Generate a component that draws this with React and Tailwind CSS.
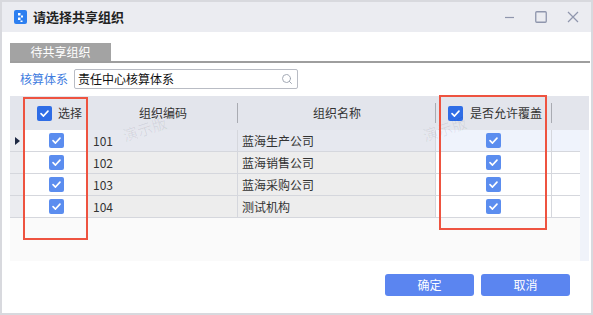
import { Search } from "lucide-react";

const ROWS = [
  { code: "101", name: "蓝海生产公司" },
  { code: "102", name: "蓝海销售公司" },
  { code: "103", name: "蓝海采购公司" },
  { code: "104", name: "测试机构" },
];

function Check({ dark }) {
  return (
    <span
      className={
        "flex h-[15px] w-[15px] items-center justify-center rounded-[2px] " +
        (dark ? "bg-[#2f6de6]" : "bg-[#5b8def]")
      }
    >
      <svg width="11" height="11" viewBox="0 0 12 12" fill="none">
        <path d="M2.2 6.2 L4.9 8.8 L9.8 3.4" stroke="#fff" strokeWidth="1.8" strokeLinecap="round" strokeLinejoin="round" />
      </svg>
    </span>
  );
}

function AppIcon() {
  return (
    <svg width="13" height="14" viewBox="0 0 13 14">
      <rect width="13" height="14" rx="2" fill="#2d7ff0" />
      <rect x="4" y="3" width="2.5" height="2.5" fill="#fff" />
      <rect x="7" y="5.5" width="2" height="2" fill="#fff" />
      <rect x="4" y="7.5" width="2.5" height="2.5" fill="#fff" />
      <rect x="6.5" y="10.5" width="2" height="1.5" fill="#fff" />
    </svg>
  );
}

const Sep = () => <span className="absolute right-0 top-[7px] h-[20px] w-px bg-[#a9abb2]" />;

export default function App() {
  return (
    <div
      className="flex h-[315px] w-[593px] flex-col border-2 border-[#d8d9de] bg-white text-[12px] text-[#333]"
      style={{ fontFamily: '"Noto Sans CJK SC", "Noto Sans", sans-serif' }}
    >
      {/* title bar */}
      <div className="flex h-[30px] shrink-0 items-center bg-[#ebecf1] pl-[12px] pr-[12px]">
        <AppIcon />
        <span className="ml-[6px] text-[13px] font-bold text-[#222]">请选择共享组织</span>
        <div className="ml-auto flex items-center gap-[20px] text-[#8f96ad]">
          <svg width="11" height="12" viewBox="0 0 11 12">
            <path d="M1 6.5 H10" stroke="currentColor" strokeWidth="1.2" />
          </svg>
          <svg width="12" height="12" viewBox="0 0 12 12">
            <rect x="0.75" y="0.75" width="10.5" height="10.5" rx="1" fill="none" stroke="currentColor" strokeWidth="1.3" />
          </svg>
          <svg width="12" height="12" viewBox="0 0 12 12">
            <path d="M1 1 L11 11 M11 1 L1 11" stroke="currentColor" strokeWidth="1.2" />
          </svg>
        </div>
      </div>

      <div className="flex flex-1 flex-col pl-[8px] pr-px">
        {/* tab */}
        <div className="mt-[11px] border-b-2 border-[#9e9e9e]">
          <div className="flex h-[18px] w-[101px] items-center justify-center bg-[#a3a3a3] text-[12px] text-white">
            待共享组织
          </div>
        </div>

        {/* account system */}
        <div className="mt-[6px] flex items-center">
          <span className="ml-[10px] text-[12px] text-[#3f7de0]">核算体系</span>
          <div className="ml-[6px] flex h-[20px] w-[224px] items-center rounded-[2px] border border-[#b9bcc4] pl-[3px] pr-[4px]">
            <span className="text-[12px] text-[#111]">责任中心核算体系</span>
            <Search className="ml-auto h-[12px] w-[12px] text-[#9aa0ad]" strokeWidth={1.8} />
          </div>
        </div>

        {/* grid */}
        <div className="relative mr-px mt-[7px] flex h-[165px] flex-col bg-[#fafafa]">
          {/* header */}
          <div className="flex h-[34px] bg-[#e3e5ec]">
            <div className="relative w-[15px]">
              <Sep />
            </div>
            <div className="relative flex w-[63px] items-center pl-[12px]">
              <Check dark />
              <span className="ml-[6px]">选择</span>
              <Sep />
            </div>
            <div className="relative flex w-[150px] items-center justify-center">
              组织编码
              <Sep />
            </div>
            <div className="relative flex w-[198px] items-center justify-center">
              组织名称
              <Sep />
            </div>
            <div className="relative flex w-[116px] items-center pl-[12px]">
              <Check dark />
              <span className="ml-[7px]">是否允许覆盖</span>
              <Sep />
            </div>
            <div className="flex-1" />
          </div>

          {/* body */}
          <div className="flex flex-1">
            <div className="flex w-[570px] flex-col">
              {ROWS.map((r, i) => {
                const sel = i === 0;
                return (
                  <div key={r.code} className="flex h-[22px] border-b border-[#d5d7dd]">
                    <div className="flex w-[15px] items-center justify-center bg-[#ebecf0]">
                      {sel && (
                        <svg width="5" height="8" viewBox="0 0 5 8">
                          <path d="M0 0 L5 4 L0 8 Z" fill="#1f2a44" />
                        </svg>
                      )}
                    </div>
                    <div className="flex w-[63px] items-center justify-center border-r border-[#d5d7dd] bg-white">
                      <Check />
                    </div>
                    <div
                      className={
                        "flex w-[150px] items-center border-r border-[#d5d7dd] pl-[5px] " +
                        (sel ? "bg-[#e6e8ef]" : "bg-[#ededed]")
                      }
                    >
                      {r.code}
                    </div>
                    <div
                      className={
                        "flex w-[198px] items-center border-r border-[#d5d7dd] pl-[4px] " +
                        (sel ? "bg-[#e6e8ef]" : "bg-[#ededed]")
                      }
                    >
                      {r.name}
                    </div>
                    <div
                      className={
                        "flex w-[116px] items-center justify-center border-r border-[#d5d7dd] " +
                        (sel ? "bg-[#eff3fc]" : "bg-white")
                      }
                    >
                      <Check />
                    </div>
                    <div className={"flex-1 " + (sel ? "bg-[#eff3fc]" : "bg-white")} />
                  </div>
                );
              })}
            </div>
            <div className="flex-1 bg-[#f0f3fa]" />
          </div>

          {/* watermarks */}
          <span className="pointer-events-none absolute left-[112px] top-[25px] -rotate-[18deg] text-[15px] leading-none text-black/[0.07]">
            演示版
          </span>
          <span className="pointer-events-none absolute left-[412px] top-[25px] -rotate-[18deg] text-[15px] leading-none text-black/[0.07]">
            演示版
          </span>

          {/* highlight boxes */}
          <div className="pointer-events-none absolute left-[13px] top-px h-[143px] w-[65px] border-2 border-[#ee5340]" />
          <div className="pointer-events-none absolute left-[429px] top-[-1px] h-[135px] w-[108px] border-2 border-[#ee5340]" />
        </div>

        {/* buttons */}
        <div className="mt-[13px] flex justify-end gap-[7px] pr-[20px]">
          <button className="flex h-[22px] w-[89px] items-center justify-center rounded-[3px] bg-[#5b85f0] text-[12px] text-white">
            确定
          </button>
          <button className="flex h-[22px] w-[89px] items-center justify-center rounded-[3px] bg-[#5b85f0] text-[12px] text-white">
            取消
          </button>
        </div>
      </div>
    </div>
  );
}
